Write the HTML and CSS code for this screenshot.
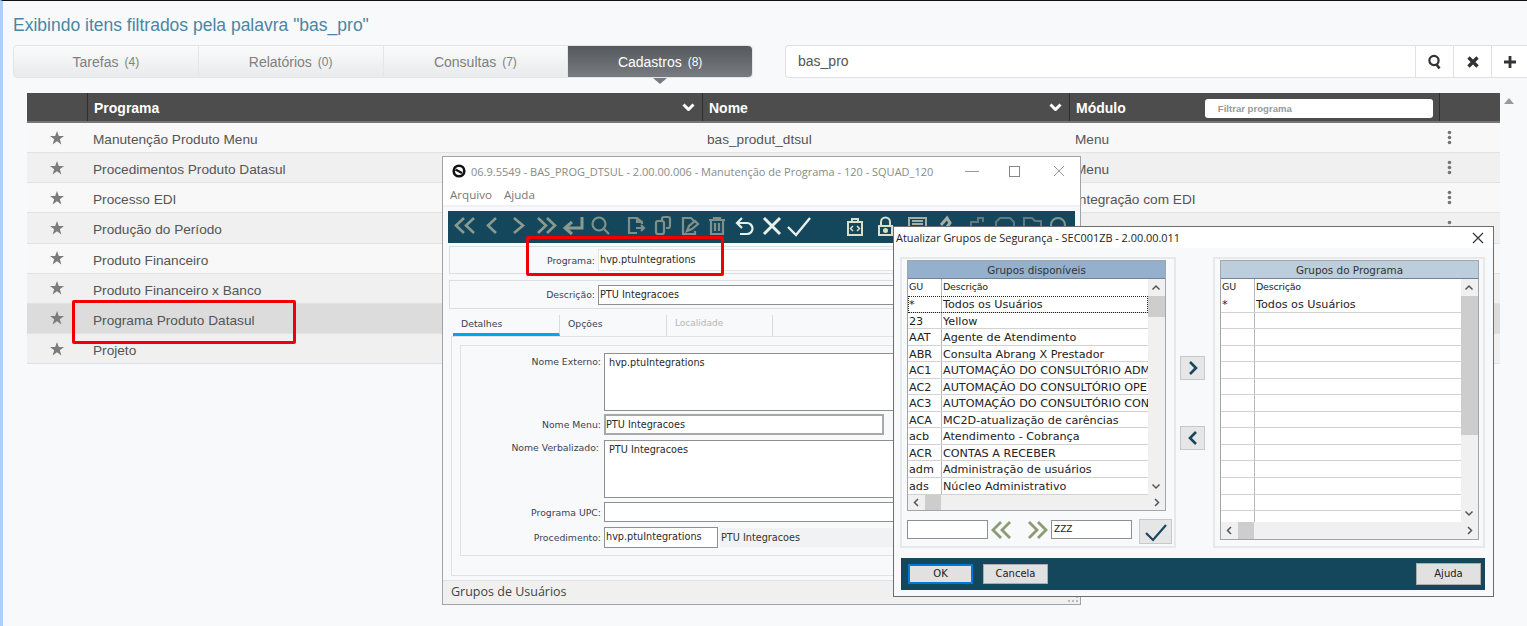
FILE: index.html
```html
<!DOCTYPE html>
<html lang="pt-BR">
<head>
<meta charset="utf-8">
<title>Exibindo itens filtrados</title>
<link rel="stylesheet" href="styles.css">
</head>
<body>
<svg class="defs" width="0" height="0" aria-hidden="true">
  <defs>
    <polygon id="star" points="7,0 8.8,5 14,5 9.8,8.2 11.4,13.4 7,10.2 2.6,13.4 4.2,8.2 0,5 5.2,5"/>
    <g id="kebab"><circle cx="2.5" cy="2.5" r="1.8"/><circle cx="2.5" cy="7.5" r="1.8"/><circle cx="2.5" cy="12.5" r="1.8"/></g>
    <path id="chev" d="M1.5 1.5L6.5 6.5L11.5 1.5" fill="none" stroke="#fff" stroke-width="3"/>
  </defs>
</svg>
<div class="page">
  <h1 class="heading">Exibindo itens filtrados pela palavra "bas_pro"</h1>
  <div class="topbar">
    <nav class="tabs">
      <div class="tab">Tarefas <small>(4)</small></div>
      <div class="tab">Relatórios <small>(0)</small></div>
      <div class="tab">Consultas <small>(7)</small></div>
      <div class="tab tab-active">Cadastros <small>(8)</small></div>
    </nav>
    <div class="search">
      <div class="search-text">bas_pro</div>
      <div class="search-btn"><svg width="16" height="16" viewBox="0 0 16 16"><circle cx="7" cy="6.5" r="4.6" fill="none" stroke="#333" stroke-width="2.2"/><path d="M9.5 10.5L12.5 14.5" stroke="#333" stroke-width="2.6"/></svg></div>
      <div class="search-btn"><svg width="14" height="14" viewBox="0 0 14 14"><path d="M2.5 2.5L11.5 11.5M11.5 2.5L2.5 11.5" stroke="#333" stroke-width="3.4"/></svg></div>
      <div class="search-btn"><svg width="14" height="14" viewBox="0 0 14 14"><path d="M7 1V13M1 7H13" stroke="#333" stroke-width="2.8"/></svg></div>
    </div>
  </div>

  <div class="grid-wrap">
    <div class="grid">
      <div class="row row-head">
        <div class="cell"></div>
        <div class="cell cell-sort">Programa<svg width="13" height="8" viewBox="0 0 13 8"><use href="#chev"/></svg></div>
        <div class="cell cell-sort">Nome<svg width="13" height="8" viewBox="0 0 13 8"><use href="#chev"/></svg></div>
        <div class="cell cell-filter">Módulo<div class="filter">Filtrar programa</div></div>
        <div class="cell"></div>
      </div>
      <div class="row"><div class="cell cell-star"><svg width="14" height="14" viewBox="0 0 14 14"><use href="#star"/></svg></div><div class="cell">Manutenção Produto Menu</div><div class="cell cell-name">bas_produt_dtsul</div><div class="cell">Menu</div><div class="cell"><svg class="kebab" width="5" height="15" viewBox="0 0 5 15"><use href="#kebab"/></svg></div></div>
      <div class="row row-alt"><div class="cell cell-star"><svg width="14" height="14" viewBox="0 0 14 14"><use href="#star"/></svg></div><div class="cell">Procedimentos Produto Datasul</div><div class="cell"></div><div class="cell">Menu</div><div class="cell"><svg class="kebab" width="5" height="15" viewBox="0 0 5 15"><use href="#kebab"/></svg></div></div>
      <div class="row"><div class="cell cell-star"><svg width="14" height="14" viewBox="0 0 14 14"><use href="#star"/></svg></div><div class="cell">Processo EDI</div><div class="cell"></div><div class="cell">Integração com EDI</div><div class="cell"><svg class="kebab" width="5" height="15" viewBox="0 0 5 15"><use href="#kebab"/></svg></div></div>
      <div class="row row-alt"><div class="cell cell-star"><svg width="14" height="14" viewBox="0 0 14 14"><use href="#star"/></svg></div><div class="cell">Produção do Período</div><div class="cell"></div><div class="cell"></div><div class="cell"><svg class="kebab" width="5" height="15" viewBox="0 0 5 15"><use href="#kebab"/></svg></div></div>
      <div class="row"><div class="cell cell-star"><svg width="14" height="14" viewBox="0 0 14 14"><use href="#star"/></svg></div><div class="cell">Produto Financeiro</div><div class="cell"></div><div class="cell"></div><div class="cell"></div></div>
      <div class="row row-alt"><div class="cell cell-star"><svg width="14" height="14" viewBox="0 0 14 14"><use href="#star"/></svg></div><div class="cell">Produto Financeiro x Banco</div><div class="cell"></div><div class="cell"></div><div class="cell"></div></div>
      <div class="row row-sel"><div class="cell cell-star"><svg width="14" height="14" viewBox="0 0 14 14"><use href="#star"/></svg></div><div class="cell">Programa Produto Datasul</div><div class="cell"></div><div class="cell"></div><div class="cell"></div></div>
      <div class="row row-alt"><div class="cell cell-star"><svg width="14" height="14" viewBox="0 0 14 14"><use href="#star"/></svg></div><div class="cell">Projeto</div><div class="cell"></div><div class="cell"></div><div class="cell"></div></div>
    </div>
    <svg class="page-arrow" width="10" height="6" viewBox="0 0 10 6"><path d="M5 0L10 6H0Z" fill="#9a9a9a"/></svg>
  </div>

  <!-- Janela de manutenção -->
  <section class="win win-main">
    <header class="win-title">
      <svg class="win-logo" width="14" height="14" viewBox="0 0 14 14"><circle cx="7" cy="7" r="5.300" fill="none" stroke="#111" stroke-width="2.600"/><path d="M3.500 5.500L10 9" stroke="#111" stroke-width="2"/></svg>
      <span class="win-title-text">06.9.5549 - BAS_PROG_DTSUL - 2.00.00.006 - Manutenção de Programa - 120 - SQUAD_120</span>
      <div class="win-ctrl">
        <svg width="14" height="12" viewBox="0 0 14 12"><path d="M0 6.500H14" stroke="#999"/></svg>
        <svg width="11" height="11" viewBox="0 0 11 11"><rect x=".5" y=".5" width="10" height="10" fill="none" stroke="#888"/></svg>
        <svg width="12" height="12" viewBox="0 0 12 12"><path d="M1 1L11 11M11 1L1 11" stroke="#999"/></svg>
      </div>
    </header>
    <div class="win-menu"><span>Arquivo</span><span>Ajuda</span></div>
    <div class="toolbar">
      <svg width="627" height="32" viewBox="0 0 627 32" fill="none">
        <g stroke="#8b9a8f" stroke-width="2.600">
          <path d="M16 7L8 14.500L16 22M26 7L18 14.500L26 22"/>
          <path d="M48 7L40 14.500L48 22"/>
          <path d="M66 7L75 14.500L66 22"/>
          <path d="M90 7L98 14.500L90 22M99 7L107 14.500L99 22"/>
          <path d="M134 6V17H118M124 11L117 17L124 23" stroke-width="3"/>
        </g>
        <g stroke="#7f9088" stroke-width="2.200">
          <circle cx="151" cy="13" r="6.500"/><path d="M156 18L161 23"/>
          <path d="M189 22H181V7H189L194 11V13M189 7V11H194M188 17H196M193 14L196 17L193 20"/>
          <path d="M214 10V8Q214 6 216 6H220Q222 6 222 8V15Q222 17 220 17H218M208 12Q208 10 210 10H214Q216 10 216 12V21Q216 23 214 23H210Q208 23 208 21Z"/>
          <path d="M247 11L243 7H235V23H247V20M239 20L241 15L247 10L250 13L244 18Z"/>
          <path d="M261 9H277M266 9V7H272V9M263 9V23H275V9M267 12V20M271 12V20"/>
        </g>
        <g stroke="#e9efe9">
          <path d="M294 7L289 12L294 17M289 12H299A5.500 5.500 0 0 1 299 23H292" stroke-width="2.200"/>
          <path d="M316 7L332 23M332 7L316 23" stroke-width="3"/>
          <path d="M340 16L348 24L362 7" stroke-width="2.400"/>
        </g>
        <g stroke="#d9e0c9" stroke-width="2">
          <path d="M400 11H414V24H400ZM404 11V8H410V11"/>
          <path d="M405 15L402.500 17.500L405 20M409 15L411.500 17.500L409 20" stroke-width="1.500"/>
          <rect x="431" y="15" width="13" height="9"/><path d="M433 15V11A4.500 4.500 0 0 1 442 11V15"/>
          <circle cx="437.500" cy="19.500" r="1.500" fill="#d9e0c9"/>
          <path d="M461 7H478V24H461ZM464 10H475M464 13H475" stroke="#a5b0a5"/>
          <path d="M493 14L499 7L502 12L496 20" stroke="#a5b0a5" stroke-width="3"/>
          <path d="M523 15V11H530V7H535V11" stroke="#62787c"/>
          <path d="M548 15V11L552 7H562L566 11V15" stroke="#62787c"/>
          <path d="M576 15V7H584L587 10H593V15" stroke="#62787c"/>
          <circle cx="610" cy="14" r="7" stroke="#85968f"/>
        </g>
      </svg>
    </div>
    <div class="box box-first"><label class="box-label">Programa:</label><div class="field field-flat">hvp.ptuIntegrations</div></div>
    <div class="box box-second"><label class="box-label">Descrição:</label><div class="field">PTU Integracoes</div></div>
    <div class="form-tabs">
      <div class="form-tab form-tab-on">Detalhes</div>
      <div class="form-tab">Opções</div>
      <div class="form-tab form-tab-off">Localidade</div>
    </div>
    <div class="panel">
      <div class="group">
        <div class="frow"><label class="label-ext">Nome Externo:</label><div class="field area">hvp.ptuIntegrations</div></div>
        <div class="frow frow-menu"><label class="label-low">Nome Menu:</label><div class="field field-menu">PTU Integracoes</div></div>
        <div class="frow frow-verb"><label class="label-verb">Nome Verbalizado:</label><div class="field area">PTU Integracoes</div></div>
        <div class="frow frow-upc"><label class="label-low">Programa UPC:</label><div class="field field-upc"></div></div>
        <div class="frow frow-proc"><label class="label-low">Procedimento:</label><div class="field field-proc">hvp.ptuIntegrations</div><div class="field-desc">PTU Integracoes</div></div>
      </div>
    </div>
    <footer class="status">Grupos de Usuários
      <svg class="grip" width="11" height="7" viewBox="0 0 11 7"><path d="M8 0h2v2H8zM4 4h2v2H4zM8 4h2v2H8zM0 4h2v2H0z" fill="#bbb"/></svg>
    </footer>
  </section>

  <!-- Diálogo de grupos -->
  <section class="win win-dialog">
    <header class="dlg-title"><span>Atualizar Grupos de Segurança - SEC001ZB - 2.00.00.011</span>
      <svg width="12" height="12" viewBox="0 0 12 12"><path d="M1 1L11 11M11 1L1 11" stroke="#333" stroke-width="1.200"/></svg>
    </header>
    <div class="dlg-body">
      <div class="dlg-group dlg-group-left">
        <div class="browse browse-left">
          <div class="browse-head">Grupos disponíveis</div>
          <div class="browse-main">
            <div class="browse-rows">
              <div class="brow brow-cols"><span>GU</span><span>Descrição</span></div>
              <div class="brow brow-focus"><span>*</span><span>Todos os Usuários</span></div>
              <div class="brow"><span>23</span><span>Yellow</span></div>
              <div class="brow"><span>AAT</span><span>Agente de Atendimento</span></div>
              <div class="brow"><span>ABR</span><span>Consulta Abrang X Prestador</span></div>
              <div class="brow"><span>AC1</span><span>AUTOMAÇÃO DO CONSULTÓRIO ADM</span></div>
              <div class="brow"><span>AC2</span><span>AUTOMAÇÃO DO CONSULTÓRIO OPE</span></div>
              <div class="brow"><span>AC3</span><span>AUTOMAÇÃO DO CONSULTÓRIO CON</span></div>
              <div class="brow"><span>ACA</span><span>MC2D-atualização de carências</span></div>
              <div class="brow"><span>acb</span><span>Atendimento - Cobrança</span></div>
              <div class="brow"><span>ACR</span><span>CONTAS A RECEBER</span></div>
              <div class="brow"><span>adm</span><span>Administração de usuários</span></div>
              <div class="brow"><span>ads</span><span>Núcleo Administrativo</span></div>
            </div>
            <div class="vscroll">
              <svg class="sb-up" width="16" height="17" viewBox="0 0 16 17"><path d="M4.500 10.500L8 7L11.500 10.500" fill="none" stroke="#555" stroke-width="1.500"/></svg>
              <div class="vthumb vthumb-left"></div>
              <svg class="sb-down" width="16" height="17" viewBox="0 0 16 17"><path d="M4.500 6.500L8 10L11.500 6.500" fill="none" stroke="#555" stroke-width="1.500"/></svg>
            </div>
          </div>
          <div class="hscroll">
            <svg width="17" height="15" viewBox="0 0 17 15"><path d="M10 4L6.500 7.500L10 11" fill="none" stroke="#555" stroke-width="1.500"/></svg>
            <div class="hthumb"></div>
            <svg class="sb-right" width="17" height="15" viewBox="0 0 17 15"><path d="M7 4L10.500 7.500L7 11" fill="none" stroke="#555" stroke-width="1.500"/></svg>
          </div>
        </div>
        <div class="range">
          <div class="range-in"></div>
          <svg width="61" height="20" viewBox="0 0 61 20" fill="none" stroke="#8e9a72" stroke-width="2.800"><path d="M12 2L4 10L12 18M21 2L13 10L21 18M40 2L48 10L40 18M49 2L57 10L49 18"/></svg>
          <div class="range-in range-zzz">ZZZ</div>
          <div class="btn-icon btn-check"><svg width="24" height="20" viewBox="0 0 24 20" fill="none"><path d="M2 11L9 18L22 3" stroke="#17475e" stroke-width="2.200"/></svg></div>
        </div>
      </div>
      <div class="move">
        <div class="btn-icon"><svg width="12" height="16" viewBox="0 0 12 16" fill="none"><path d="M3 2L9 8L3 14" stroke="#17475e" stroke-width="2.600"/></svg></div>
        <div class="btn-icon"><svg width="12" height="16" viewBox="0 0 12 16" fill="none"><path d="M9 2L3 8L9 14" stroke="#17475e" stroke-width="2.600"/></svg></div>
      </div>
      <div class="dlg-group dlg-group-right">
        <div class="browse browse-right">
          <div class="browse-head browse-head-light">Grupos do Programa</div>
          <div class="browse-main">
            <div class="browse-rows">
              <div class="brow brow-cols"><span>GU</span><span>Descrição</span></div>
              <div class="brow"><span>*</span><span>Todos os Usuários</span></div>
              <div class="brow"><span></span><span></span></div>
              <div class="brow"><span></span><span></span></div>
              <div class="brow"><span></span><span></span></div>
              <div class="brow"><span></span><span></span></div>
              <div class="brow"><span></span><span></span></div>
              <div class="brow"><span></span><span></span></div>
              <div class="brow"><span></span><span></span></div>
              <div class="brow"><span></span><span></span></div>
              <div class="brow"><span></span><span></span></div>
              <div class="brow"><span></span><span></span></div>
              <div class="brow"><span></span><span></span></div>
              <div class="brow"><span></span><span></span></div>
              <div class="brow"><span></span><span></span></div>
            </div>
            <div class="vscroll">
              <svg class="sb-up" width="16" height="17" viewBox="0 0 16 17"><path d="M4.500 10.500L8 7L11.500 10.500" fill="none" stroke="#555" stroke-width="1.500"/></svg>
              <div class="vthumb vthumb-right"></div>
              <svg class="sb-down" width="16" height="17" viewBox="0 0 16 17"><path d="M4.500 6.500L8 10L11.500 6.500" fill="none" stroke="#555" stroke-width="1.500"/></svg>
            </div>
          </div>
          <div class="hscroll hscroll-tall">
            <svg width="17" height="15" viewBox="0 0 17 15"><path d="M10 4L6.500 7.500L10 11" fill="none" stroke="#555" stroke-width="1.500"/></svg>
            <div class="hthumb"></div>
            <svg class="sb-right" width="17" height="15" viewBox="0 0 17 15"><path d="M7 4L10.500 7.500L7 11" fill="none" stroke="#555" stroke-width="1.500"/></svg>
          </div>
        </div>
      </div>
    </div>
    <footer class="dlg-foot">
      <div class="btn btn-ok">OK</div>
      <div class="btn">Cancela</div>
      <div class="btn btn-help">Ajuda</div>
    </footer>
  </section>

  <div class="mark mark-row"></div>
  <div class="mark mark-field"></div>
</div>
</body>
</html>
```

FILE: styles.css
```css
* { box-sizing: border-box; }
html, body { margin: 0; height: 100%; overflow: hidden; }
body {
  background: #f8f9fb;
  font-family: "Liberation Sans", Arial, sans-serif;
  color: #555;
}
.defs { position: absolute; }
.page {
  position: relative;
  height: 626px;
  border-top: 1px solid #111;
  border-left: 3px solid #a9d1fb;
  padding-left: 10px;
}
.heading {
  margin: 0;
  padding-top: 14px;
  height: 44px;
  font-size: 17.5px;
  line-height: 20px;
  font-weight: 400;
  color: #4a86a3;
}

/* Tabs + search */
.topbar { display: flex; gap: 32px; height: 33px; }
.tabs {
  display: flex;
  flex: none;
  width: 740px;
  border: 1px solid #e2e4e6;
  border-radius: 4px;
  background: linear-gradient(#fbfbfb, #e8eaec);
}
.tab {
  flex: 1;
  display: flex;
  align-items: center;
  justify-content: center;
  gap: 6px;
  font-size: 14px;
  color: #808080;
  border-left: 1px solid #e4e6e8;
}
.tab:first-child { border-left: 0; }
.tab small { font-size: 12px; }
.tab-active {
  position: relative;
  color: #fff;
  border-radius: 0 4px 4px 0;
  background: linear-gradient(#55595d, #787c81);
}
.tab-active::after {
  content: "";
  position: absolute;
  left: 85px;
  top: 32px;
  border: 7px solid transparent;
  border-top: 6px solid #787c81;
  border-bottom: 0;
}
.search {
  flex: 1;
  display: flex;
  background: #fff;
  border: 1px solid #dfe1e3;
  border-right: 0;
  border-radius: 4px 0 0 4px;
}
.search-text { flex: 1; padding-left: 12px; font-size: 14px; line-height: 31px; color: #555; }
.search-btn {
  width: 38px;
  display: flex;
  align-items: center;
  justify-content: center;
  border-left: 1px solid #dfe1e3;
}
.search-btn:last-child { width: 36px; }

/* Grid */
.grid-wrap { display: flex; margin: 15px 0 0 14px; }
.grid { width: 1473px; }
.row {
  display: grid;
  grid-template-columns: 60px 615px 367px 370px 61px;
  height: 30.15px;
  font-size: 13.65px;
  line-height: 33px;
  color: #555;
  background: #f8f8f8;
  border-bottom: 1px solid #e2e2e2;
}
.row-alt { background: #f0f0f0; }
.row-sel { background: #dcdcdc; }
.row-head {
  height: 30px;
  line-height: 28px;
  font-size: 14px;
  color: #fff;
  font-weight: 700;
  background: #4d4d4d;
  border-bottom: 2px solid #777;
}
.cell { padding-left: 6px; white-space: nowrap; overflow: hidden; }
.cell-name { padding-left: 5px; }
.row-head .cell { border-left: 1px solid #2e2e2e; padding-left: 6px; padding-top: 2px; }
.row-head .cell:first-child { border-left: 0; }
.cell-sort { display: flex; justify-content: space-between; align-items: center; padding-right: 7px; }
.cell-sort svg { margin-top: -2px; }
.cell-filter { display: flex; align-items: center; }
.filter {
  width: 228px;
  height: 19px;
  margin-left: 79px;
  padding-left: 13px;
  background: #fff;
  border-radius: 3px;
  font-size: 9.6px;
  line-height: 20px;
  font-weight: 700;
  color: #9a9a9a;
}
.cell-star { display: flex; align-items: center; justify-content: center; padding: 0; }
.cell-star svg { fill: #7c7c7c; }
.kebab { fill: #757575; margin: 7px 0 0 2px; display: block; }
.page-arrow { margin: 5px 0 0 4px; }

/* Windows */
.win {
  position: absolute;
  display: flex;
  flex-direction: column;
  border: 1px solid #a3a3a3;
  background: #f8f9fb;
  font-family: "DejaVu Sans", sans-serif;
  font-size: 9.7px;
  color: #333;
}
.win-main { left: 439px; top: 155px; width: 639px; height: 449px; z-index: 1; }
.win-dialog { left: 890px; top: 225px; width: 601px; height: 371px; border-color: #6d6d6d; z-index: 2; }

.win-title {
  display: flex;
  align-items: center;
  height: 28px;
  padding: 0 17px 0 9px;
  background: #fff;
}
.win-logo { flex: none; }
.win-title-text {
  margin-left: 5px;
  font-family: "Open Sans", sans-serif;
  font-size: 11px;
  color: #8a8a8a;
  white-space: nowrap;
}
.win-ctrl { display: flex; align-items: center; margin-left: 32px; gap: 30px; }
.win-ctrl svg:last-child { margin-left: 3px; }
.win-menu {
  display: flex;
  gap: 12px;
  height: 22px;
  padding: 2px 0 0 7px;
  background: #fff;
  font-family: "Open Sans", sans-serif;
  font-size: 11.6px;
  color: #777;
  border-bottom: 2px solid #f0f1f3;
}
.toolbar { margin: 4px 5px 0; height: 32px; background: #14475c; }
.toolbar svg { display: block; }

.box {
  display: flex;
  align-items: center;
  margin: 3px 5px 0 6px;
  border: 1px solid #dcdfe2;
}
.box-first { height: 28px; }
.box-second { height: 29px; margin-top: 6px; }
.box-label { width: 148px; text-align: right; padding-right: 3px; flex: none; font-size: 9.3px; color: #3a3f55; }
.field {
  height: 20px;
  flex: 1;
  border: 1px solid #8f8f8f;
  background: #fff;
  line-height: 18px;
  padding-left: 1px;
  color: #2a2a2a;
  white-space: nowrap;
}
.field-flat { border-color: #e4e4e4; height: 22px; line-height: 20px; }
.form-tabs { display: flex; height: 21px; margin: 6px 0 0 10px; font-size: 9.3px; }
.form-tab {
  width: 106px;
  padding: 3px 0 0 8px;
  border-right: 1px solid #dcdcdc;
  color: #3a3f55;
}
.form-tab:nth-child(2) { width: 107px; }
.form-tab-on { border-bottom: 3px solid #00a6e6; width: 107px; }
.form-tab-off { color: #b5b5b5; font-size: 9px; }
.panel {
  margin: 0 5px 0 8px;
  height: 240px;
  padding: 8px 8px 0;
  border: 1px solid #dfe2e5;
}
.group {
  height: 211px;
  padding-top: 7px;
  border: 1px solid #dfe2e5;
}
.frow { display: flex; margin-right: 6px; }
.frow label {
  width: 143px;
  flex: none;
  text-align: right;
  padding-right: 3px;
  padding-top: 2px;
  font-size: 9.3px;
  color: #3a3f55;
}
.frow .label-ext { padding-top: 3px; }
.frow .label-low { padding-top: 5px; }
.frow .label-verb { padding-right: 5px; }
.frow .field { flex: 1; }
.area { height: 58px !important; padding: 3px 0 0 4px; line-height: 12px; }
.frow-menu { margin-top: 3px; }
.frow-verb { margin-top: 5px; }
.frow-upc { margin-top: 4px; }
.frow-proc { margin-top: 5px; }
.frow .field-menu { flex: none; width: 280px; height: 21px; border-width: 2px; border-color: #a8a8a8; line-height: 18px; padding-left: 0; }
.field-upc { height: 20px; }
.frow .field-proc { flex: none; width: 114px; height: 21px; line-height: 17px; padding-left: 1px; }
.field-desc {
  flex: 1;
  margin: 1px 0 0 2px;
  height: 19px;
  padding-left: 1px;
  background: #f1f2f3;
  line-height: 20px;
  color: #333;
}
.status {
  position: relative;
  margin-top: 4px;
  flex: 1;
  padding: 2px 0 0 8px;
  background: #f0f0f0;
  border-top: 1px solid #e0e0e0;
  font-family: "Open Sans", sans-serif;
  font-size: 12.5px;
  color: #444;
}
.grip { position: absolute; right: 1px; bottom: 1px; }

/* Dialog */
.dlg-title {
  display: flex;
  align-items: center;
  justify-content: space-between;
  height: 21px;
  padding: 0 9px 0 2px;
  background: #fff;
  font-family: "Open Sans", sans-serif;
  font-size: 10.9px;
  color: #222;
  white-space: nowrap;
}
.dlg-body { display: flex; padding: 9px 0 0 6px; height: 300px; }
.dlg-group { height: 291px; border: 2px solid #e6e8ea; flex: none; }
.dlg-group-left { width: 276px; padding: 1px 0 0 5px; }
.dlg-group-right { width: 272px; padding: 1px 0 0 5px; }
.browse { display: flex; flex-direction: column; border: 1px solid #a2a6aa; background: #f0f0f0; }
.browse-left { width: 259px; height: 251px; }
.browse-right { width: 259px; height: 280px; }
.browse-head {
  height: 18px;
  flex: none;
  text-align: center;
  font-size: 10.4px;
  line-height: 19px;
  background: #94b0cd;
  border-bottom: 1px solid #6f8296;
  color: #333;
}
.browse-head-light { background: #bccddb; }
.browse-main { display: flex; flex: 1; min-height: 0; }
.browse-rows { flex: 1; min-width: 0; overflow: hidden; background: #fff; }
.brow {
  display: grid;
  grid-template-columns: 33px 1fr;
  height: 16.55px;
  line-height: 17px;
  font-size: 11.2px;
  color: #222;
  border-bottom: 1.5px solid #d2d2d2;
  white-space: nowrap;
}
.brow span { padding-left: 1px; overflow: hidden; }
.brow span:nth-child(2) { padding-left: 1px; border-left: 1px solid #b9b9b9; }
.brow-cols { height: 17px; line-height: 16px; border-bottom: 0; font-size: 9.5px; letter-spacing: -.2px; }
.brow-cols span:nth-child(2) { border-left: 1px solid #b9b9b9; }
.brow-focus { outline: 1px dotted #222; outline-offset: -1px; }
.vscroll { width: 17px; flex: none; display: flex; flex-direction: column; background: #f0f0f0; }
.sb-up, .sb-down { flex: none; }
.sb-down { margin-top: auto; }
.vthumb { background: #cdcdcd; flex: none; }
.vthumb-left { height: 21px; }
.vthumb-right { height: 139px; }
.hscroll { display: flex; align-items: center; height: 15px; flex: none; background: #f0f0f0; }
.hscroll-tall { height: 17px; }
.hthumb { width: 16px; align-self: stretch; background: #cdcdcd; }
.sb-right { margin-left: auto; }
.range { display: flex; align-items: center; margin-top: 8px; height: 25px; }
.range-in {
  width: 81px;
  height: 19px;
  margin-bottom: 4px;
  border: 1px solid #8f8f8f;
  background: #fff;
  line-height: 17px;
  padding-left: 2px;
  color: #222;
}
.range svg { margin: 0 1px 3px; flex: none; }
.range-zzz { font-size: 9px; }
.btn-icon {
  display: flex;
  align-items: center;
  justify-content: center;
  width: 25px;
  height: 24px;
  background: #e6e6e6;
  border: 1px solid #c8c8c8;
}
.btn-check { width: 33px; height: 25px; margin-left: 7px; }
.btn-check svg { margin: 0; }
.move {
  flex: none;
  width: 37px;
  padding: 99px 0 0 4px;
  display: flex;
  flex-direction: column;
  gap: 46px;
}
.dlg-foot {
  display: flex;
  align-items: center;
  gap: 10px;
  margin: 10px 8px 0 7px;
  height: 32px;
  padding: 0 4px 0 7px;
  background: #14475c;
}
.btn {
  width: 65px;
  height: 20px;
  border: 1px solid #adadad;
  background: #e1e1e1;
  text-align: center;
  font-size: 10px;
  line-height: 18px;
  color: #222;
}
.btn-ok { border: 2px solid #0078d7; line-height: 16px; }
.btn-help { margin-left: auto; height: 22px; line-height: 20px; }

/* Red highlights */
.mark {
  position: absolute;
  z-index: 3;
  border: 3px solid #f00000;
  border-radius: 2px;
}
.mark-row { left: 69px; top: 299px; width: 224px; height: 44px; }
.mark-field { left: 523px; top: 235px; width: 198px; height: 40px; }
```
